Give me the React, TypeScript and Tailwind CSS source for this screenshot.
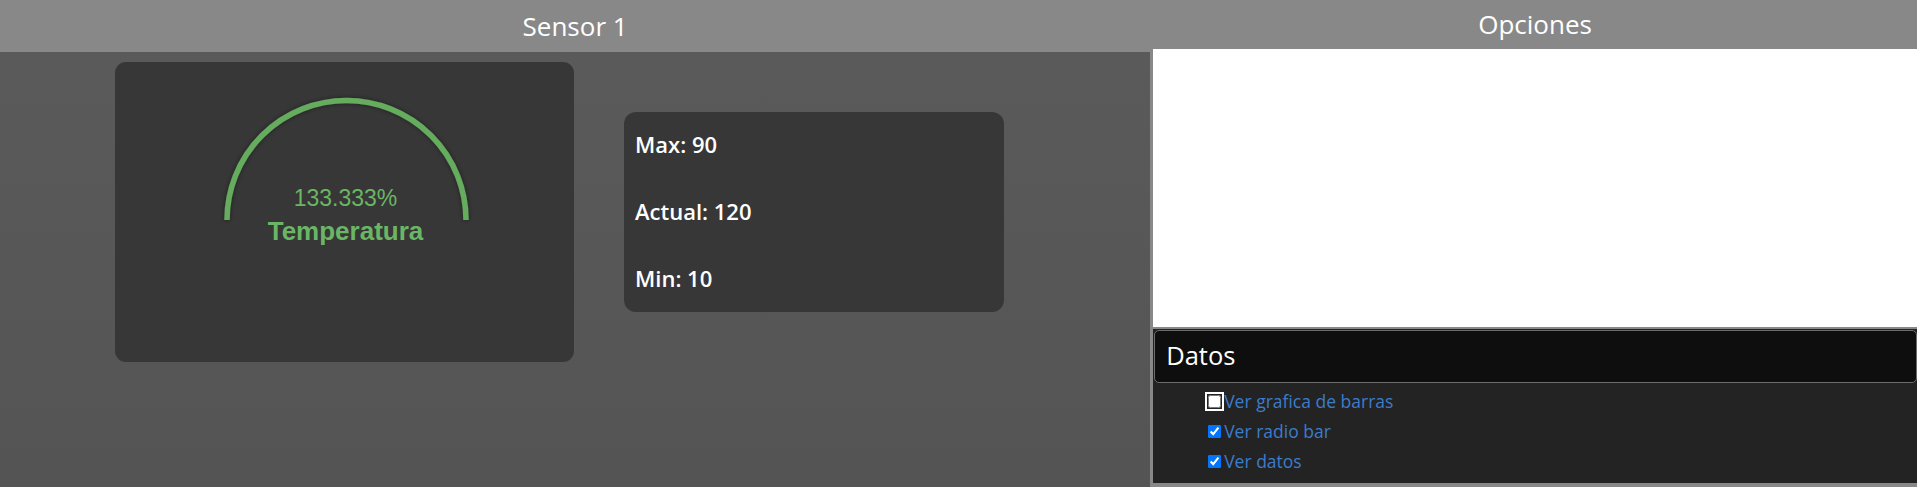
import React from 'react';

const GREEN = '#65ac5e';

const Gauge: React.FC<{ value: number; label: string }> = ({ value, label }) => {
  const cx = 231.5;
  const cy = 158;
  const r = 119.5;
  // the arc is capped at 100%, the label shows the real value
  const pct = Math.min(value, 100) / 100;
  const angle = Math.PI * (1 - pct);
  const endX = cx + r * Math.cos(angle);
  const endY = cy - r * Math.sin(angle);

  return (
    <svg width="459" height="300" viewBox="0 0 459 300">
      <defs>
        <filter id="arcShadow" x="-20%" y="-20%" width="140%" height="140%">
          <feDropShadow dx="0" dy="0" stdDeviation="2.5" floodColor="#000" floodOpacity="0.45" />
        </filter>
      </defs>
      <path
        d={`M ${cx - r} ${cy} A ${r} ${r} 0 0 1 ${endX} ${endY}`}
        fill="none"
        stroke={GREEN}
        strokeWidth="5.5"
        filter="url(#arcShadow)"
      />
      <text
        x={cx - 1}
        y="144"
        textAnchor="middle"
        fill="#6ab664"
        style={{ fontFamily: '"Liberation Sans", Arial, sans-serif', fontSize: 23 }}
      >
        {`${value.toFixed(3)}%`}
      </text>
      <text
        x={cx - 1}
        y="178"
        textAnchor="middle"
        fill="#6ab664"
        style={{ fontFamily: '"Liberation Sans", Arial, sans-serif', fontSize: 26, fontWeight: 700 }}
      >
        {label}
      </text>
    </svg>
  );
};

const options = [
  { label: 'Ver grafica de barras', checked: false, focused: true },
  { label: 'Ver radio bar', checked: true, focused: false },
  { label: 'Ver datos', checked: true, focused: false },
];

export default function App() {
  return (
    <div className="flex h-screen w-full font-['Open_Sans',sans-serif]">
      <section className="flex w-[60%] flex-col bg-gradient-to-b from-[#5b5b5b] to-[#545454]">
        <header className="flex h-[52px] shrink-0 items-center justify-center bg-[#888888] text-[26px] leading-[39px] text-white">
          Sensor 1
        </header>
        <div className="flex items-center gap-[50px] pl-[115px] pt-[10px]">
          <div className="h-[300px] w-[459px] rounded-[11px] bg-[#373737]">
            <Gauge value={133.333} label="Temperatura" />
          </div>
          <div className="flex h-[200px] w-[380px] flex-col rounded-[12px] bg-[#373737] pl-[11px] pt-[17px] text-[22px] font-semibold leading-[30px] text-white">
            <p>Max: 90</p>
            <p className="mt-[37px]">Actual: 120</p>
            <p className="mt-[37px]">Min: 10</p>
          </div>
        </div>
      </section>

      <section className="flex flex-1 flex-col bg-[#888888] pb-[4px] pl-[3px]">
        <header className="flex h-[49px] shrink-0 items-center justify-center text-[26px] leading-[39px] text-white">
          Opciones
        </header>
        <div className="h-[278px] shrink-0 bg-white" />
        <div className="mt-[2px] flex flex-1 flex-col bg-[#232323] pl-[1px] pt-px">
          <div className="flex h-[53px] items-center rounded-[5px] border border-[#6c6c6c] bg-[#0e0e0e] px-[11px] pb-[3px] text-[25.5px] text-white">
            Datos
          </div>
          <ul className="mt-[3px] pl-[54px]">
            {options.map((option) => (
              <li key={option.label} className="flex h-[30px] items-center">
                <input
                  type="checkbox"
                  defaultChecked={option.checked}
                  className={`m-0 h-[13px] w-[13px] ${option.focused ? 'rounded-[2px] outline-2 outline-offset-[1px] outline-white' : ''}`}
                />
                <span className="ml-[3px] text-[17.5px] text-[#3c7ccb]">{option.label}</span>
              </li>
            ))}
          </ul>
        </div>
      </section>
    </div>
  );
}
